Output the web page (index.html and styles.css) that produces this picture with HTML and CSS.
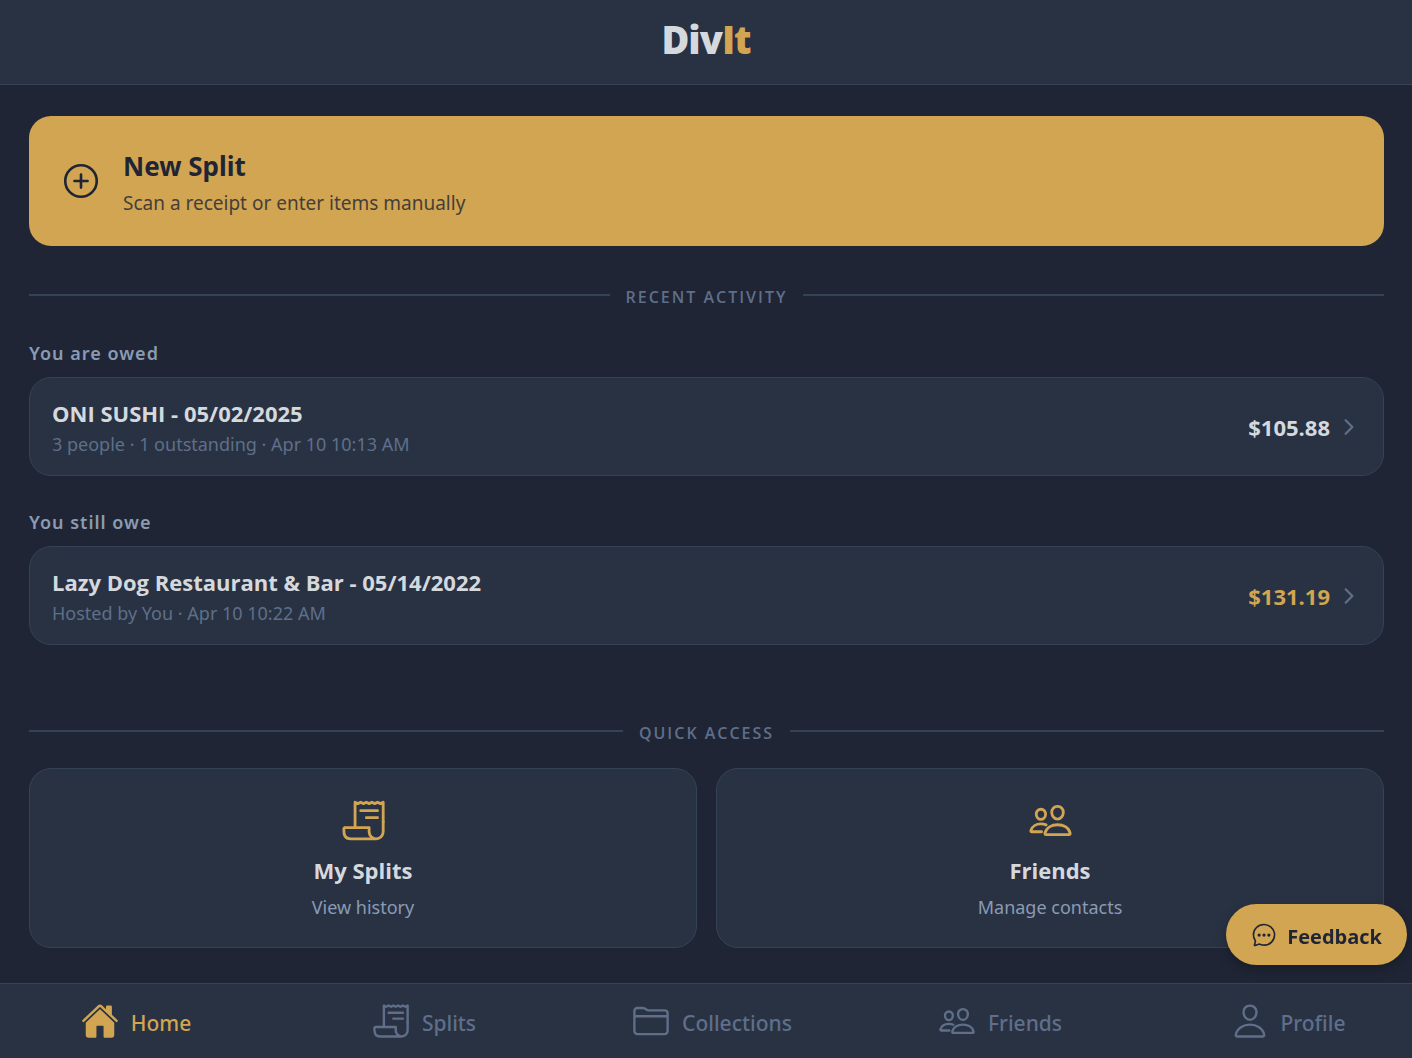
FILE: index.html
```html
<!DOCTYPE html>
<html lang="en">
<head>
<meta charset="utf-8">
<meta name="viewport" content="width=device-width, initial-scale=1">
<title>DivIt</title>
<link rel="stylesheet" href="styles.css">
</head>
<body>
<svg class="sprite" aria-hidden="true">
  <symbol id="add" viewBox="0 0 512 512"><path d="M448 256c0-106-86-192-192-192S64 150 64 256s86 192 192 192 192-86 192-192zM256 176v160M336 256H176"/></symbol>
  <symbol id="chevron" viewBox="0 0 512 512"><path d="M184 112l144 144-144 144"/></symbol>
  <symbol id="receipt" viewBox="0 0 512 512"><path d="M160 336V48l32 16 32-16 31.94 16 32.37-16L320 64l31.79-16 31.93 16L416 48l32.01 16L480 48v224"/><path d="M480 272v112a80 80 0 01-80 80h0a80 80 0 01-80-80v-48H48a15.86 15.86 0 00-16 16c0 64 6.74 112 80 112h288M224 144h192M288 224h128"/></symbol>
  <symbol id="people" viewBox="0 0 512 512"><path d="M402 168c-2.93 40.67-33.1 72-66 72s-63.12-31.32-66-72c-3-42.31 26.37-72 66-72s69 30.46 66 72z"/><path d="M336 304c-65.17 0-127.84 32.37-143.54 95.41-2.08 8.34 3.15 16.59 11.72 16.59h263.65c8.57 0 13.77-8.25 11.72-16.59C463.85 335.36 401.18 304 336 304z"/><path d="M200 185.94c-2.34 32.48-26.72 58.06-53 58.06s-50.7-25.57-53-58.06C91.61 152.15 115.34 128 147 128s55.39 24.77 53 57.94z"/><path d="M206 306c-18.05-8.27-37.93-11.45-59-11.45-52 0-102.1 25.85-114.65 76.2-1.65 6.66 2.53 13.25 9.37 13.25H154"/></symbol>
  <symbol id="person" viewBox="0 0 512 512"><path d="M344 144c-3.92 52.87-44 96-88 96s-84.15-43.12-88-96c-4-55 35-96 88-96s92 42 88 96z"/><path d="M256 304c-87 0-175.3 48-191.64 138.6C62.39 453.52 68.57 464 80 464h352c11.44 0 17.62-10.48 15.65-21.4C431.3 352 343 304 256 304z"/></symbol>
  <symbol id="folder" viewBox="0 0 512 512"><path d="M440 432H72a40 40 0 01-40-40V120a40 40 0 0140-40h75.89a40 40 0 0122.19 6.72l27.84 18.56a40 40 0 0022.19 6.72H440a40 40 0 0140 40v240a40 40 0 01-40 40zM32 192h448"/></symbol>
  <symbol id="home" viewBox="0 0 512 512"><path d="M261.56 101.28a8 8 0 00-11.06 0L66.4 277.15a8 8 0 00-2.47 5.79L63.9 448a32 32 0 0032 32H192a16 16 0 0016-16V328a8 8 0 018-8h80a8 8 0 018 8v136a16 16 0 0016 16h96.06a32 32 0 0032-32V282.94a8 8 0 00-2.47-5.79z"/><path d="M490.91 244.15l-74.8-71.56V64a16 16 0 00-16-16h-48a16 16 0 00-16 16v32l-57.92-55.38C272.77 35.14 264.71 32 256 32c-8.68 0-16.72 3.14-22.14 8.63l-212.7 203.5c-6.22 6-7 15.87-1.34 22.37A16 16 0 0043 267.56L250.5 69.28a8 8 0 0111.06 0l207.52 198.28a16 16 0 0022.59-.44c6.14-6.36 5.63-16.86-.76-22.97z"/></symbol>
  <symbol id="chat" viewBox="0 0 512 512"><path d="M87.49 380c1.19-4.38-1.44-10.47-3.95-14.86a44.86 44.86 0 00-2.54-3.8 199.81 199.81 0 01-33-110C47.65 139.09 140.73 48 255.83 48 356.21 48 440 117.54 459.58 209.85a199 199 0 014.42 41.64c0 112.41-89.49 204.93-204.59 204.93-18.3 0-43-4.6-56.47-8.37s-26.92-8.77-30.39-10.11a31.09 31.09 0 00-11.12-2.07 30.71 30.71 0 00-12.09 2.43l-67.83 24.48a16 16 0 01-4.67 1.22 9.6 9.6 0 01-9.57-9.74 15.85 15.85 0 01.6-3.29z"/><g fill="currentColor"><circle cx="160" cy="256" r="16"/><circle cx="256" cy="256" r="16"/><circle cx="352" cy="256" r="16"/></g></symbol>
</svg>

<header class="topbar">
  <h1 class="logo">Div<span class="logo-accent">It</span></h1>
</header>

<main class="content">
  <button class="new-split" type="button">
    <svg class="icon icon-add"><use href="#add"/></svg>
    <span class="new-split-text">
      <span class="new-split-title">New Split</span>
      <span class="new-split-sub">Scan a receipt or enter items manually</span>
    </span>
  </button>

  <section class="activity">
    <h2 class="divider">RECENT ACTIVITY</h2>
    <div class="groups">
      <div class="group">
        <h3 class="group-label">You are owed</h3>
        <a class="split-row" href="#oni-sushi">
          <span class="split-info">
            <span class="card-title">ONI SUSHI - 05/02/2025</span>
            <span class="card-meta">3 people · 1 outstanding · Apr 10 10:13 AM</span>
          </span>
          <span class="amount">$105.88</span>
          <svg class="icon icon-chevron"><use href="#chevron"/></svg>
        </a>
      </div>
      <div class="group">
        <h3 class="group-label">You still owe</h3>
        <a class="split-row" href="#lazy-dog">
          <span class="split-info">
            <span class="card-title">Lazy Dog Restaurant &amp; Bar - 05/14/2022</span>
            <span class="card-meta">Hosted by You · Apr 10 10:22 AM</span>
          </span>
          <span class="amount amount-owe">$131.19</span>
          <svg class="icon icon-chevron"><use href="#chevron"/></svg>
        </a>
      </div>
    </div>
  </section>

  <section class="quick">
    <h2 class="divider">QUICK ACCESS</h2>
    <div class="tiles">
      <a class="tile" href="#splits">
        <svg class="icon icon-tile"><use href="#receipt"/></svg>
        <span class="card-title">My Splits</span>
        <span class="tile-sub">View history</span>
      </a>
      <a class="tile" href="#friends">
        <svg class="icon icon-tile"><use href="#people"/></svg>
        <span class="card-title">Friends</span>
        <span class="tile-sub">Manage contacts</span>
      </a>
    </div>
  </section>
</main>

<button class="feedback" type="button"><svg class="icon icon-chat"><use href="#chat"/></svg><span class="label">Feedback</span></button>

<nav class="tabs" aria-label="Main">
  <a class="tab tab-active" href="#home"><svg class="icon icon-tab icon-solid"><use href="#home"/></svg><span class="label">Home</span></a>
  <a class="tab" href="#splits"><svg class="icon icon-tab"><use href="#receipt"/></svg><span class="label">Splits</span></a>
  <a class="tab" href="#collections"><svg class="icon icon-tab"><use href="#folder"/></svg><span class="label">Collections</span></a>
  <a class="tab" href="#friends"><svg class="icon icon-tab"><use href="#people"/></svg><span class="label">Friends</span></a>
  <a class="tab" href="#profile"><svg class="icon icon-tab"><use href="#person"/></svg><span class="label">Profile</span></a>
</nav>
</body>
</html>
```
FILE: styles.css
```css
:root {
  --bg: #1f2535;
  --panel: #293243;
  --line: #344355;
  --gold: #d1a552;
  --text: #d5d9de;
  --soft: #8a9bb3;
  --muted: #5f6f89;
  --display: "Open Sans", "Noto Sans", sans-serif;
}

* { box-sizing: border-box; }

body {
  margin: 0;
  min-height: 100vh;
  display: flex;
  flex-direction: column;
  background: var(--bg);
  color: var(--text);
  font-family: "Noto Sans", "Open Sans", sans-serif;
  font-size: 18px;
}

h1, h2, h3 { margin: 0; }
a { color: inherit; text-decoration: none; }
button { border: 0; font: inherit; color: var(--bg); background: var(--gold); cursor: pointer; }

.sprite { position: absolute; width: 0; height: 0; }

.icon {
  flex: none;
  fill: none;
  stroke: currentColor;
  stroke-width: 32px;
  stroke-linecap: round;
  stroke-linejoin: round;
}
.icon-solid { fill: currentColor; stroke: none; }
.icon-add { width: 42px; height: 42px; }
.icon-chevron { width: 24px; height: 24px; color: var(--muted); stroke-width: 48px; }
.icon-tile { width: 45px; height: 45px; color: var(--gold); }
.icon-chat { width: 26px; height: 26px; }
.icon-tab { width: 38px; height: 38px; }

.topbar {
  padding: 13px 0 19px;
  background: var(--panel);
  border-bottom: 1px solid var(--line);
  text-align: center;
}
.logo {
  font-family: var(--display);
  font-size: 38px;
  line-height: 52px;
  font-weight: 800;
  letter-spacing: -1px;
}
.logo-accent { color: var(--gold); }

.content { flex: 1; padding: 31px 28px 35px 29px; }

.new-split {
  width: 100%;
  min-height: 130px;
  display: flex;
  align-items: center;
  gap: 21px;
  padding: 24px 31px;
  border-radius: 22px;
  text-align: left;
}
.new-split-text { display: flex; flex-direction: column; gap: 2px; padding-top: 4px; }
.new-split-title { font-size: 26px; line-height: 38px; font-weight: 700; }
.new-split-sub { font-size: 19px; line-height: 32px; opacity: 0.8; }

.divider {
  display: flex;
  align-items: center;
  gap: 16px;
  color: var(--muted);
  font-family: var(--display);
  font-size: 16px;
  line-height: 24px;
  font-weight: 600;
  letter-spacing: 2px;
}
.divider::before, .divider::after {
  content: "";
  flex: 1;
  height: 2px;
  margin-bottom: 4px;
  background: var(--line);
}

.activity { margin-top: 39px; }
.groups { display: flex; flex-direction: column; gap: 34px; margin-top: 32px; }
.group-label {
  color: var(--soft);
  font-size: 18px;
  line-height: 24px;
  font-weight: 600;
  letter-spacing: 1px;
}
.split-row {
  min-height: 99px;
  margin-top: 12px;
  display: flex;
  align-items: center;
  gap: 7px;
  padding: 16px 22px;
  background: var(--panel);
  border: 1px solid var(--line);
  border-radius: 22px;
}
.split-info { flex: 1; display: flex; flex-direction: column; padding-top: 2px; }
.card-title, .amount { font-family: var(--display); font-size: 22px; line-height: 32px; font-weight: 700; }
.card-meta { font-size: 18px; line-height: 30px; color: var(--muted); }
.amount-owe { color: var(--gold); }

.quick { margin-top: 76px; }
.tiles { display: grid; grid-template-columns: 1fr 1fr; gap: 19px; margin-top: 23px; }
.tile {
  min-height: 180px;
  display: flex;
  flex-direction: column;
  align-items: center;
  padding: 29px 16px 24px;
  background: var(--panel);
  border: 1px solid var(--line);
  border-radius: 22px;
}
.tile .card-title { margin-top: 11px; }
.tile-sub { margin-top: 6px; font-size: 18px; line-height: 30px; color: var(--soft); }

.feedback {
  position: fixed;
  right: 5px;
  bottom: 93px;
  height: 61px;
  display: flex;
  align-items: center;
  gap: 10px;
  padding: 0 25px;
  border-radius: 31px;
  font-family: var(--display);
  font-size: 20px;
  font-weight: 700;
  box-shadow: 0 4px 12px rgba(0, 0, 0, 0.25);
}

.label { padding-top: 3px; }

.tabs {
  position: sticky;
  bottom: 0;
  min-height: 75px;
  display: grid;
  grid-template-columns: repeat(5, minmax(0, 1fr));
  gap: 88px;
  padding: 0 24px 0 36px;
  background: var(--panel);
  border-top: 1px solid var(--line);
}
.tab {
  display: flex;
  align-items: center;
  justify-content: center;
  gap: 12px;
  color: var(--muted);
  font-size: 21px;
  font-weight: 500;
}
.tab-active { color: var(--gold); }
```
